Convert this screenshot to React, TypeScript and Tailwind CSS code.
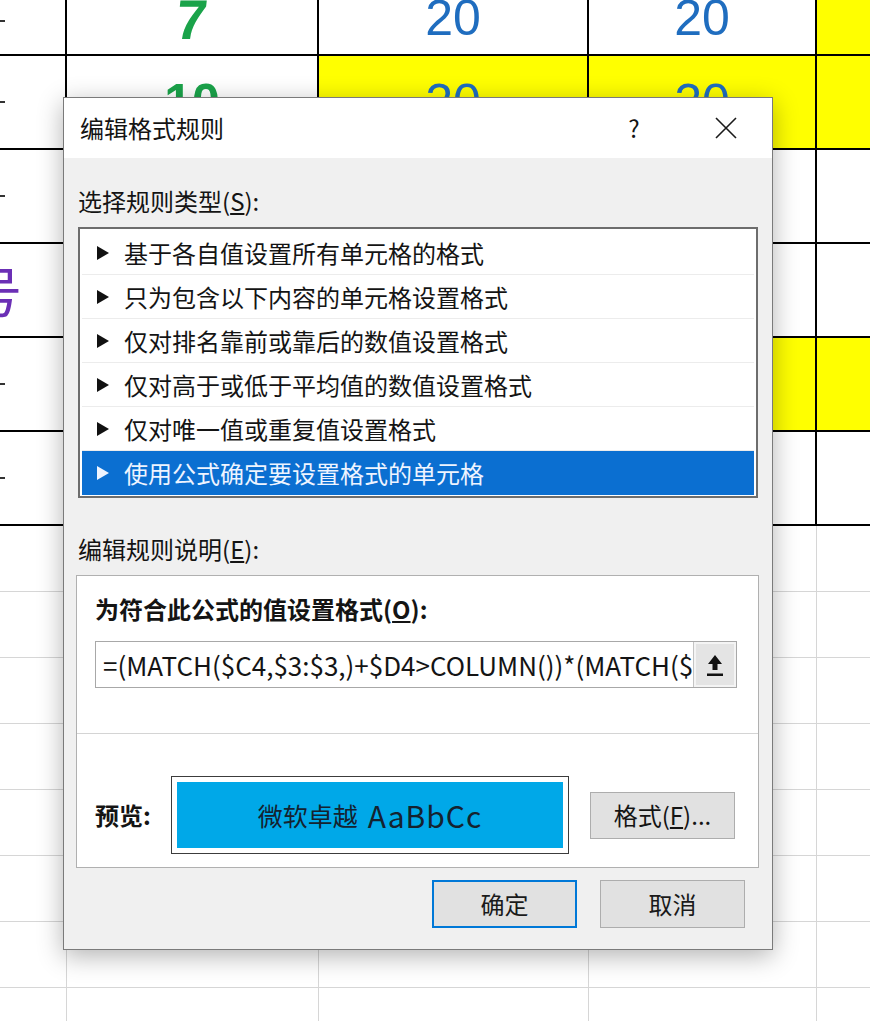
import React from 'react'

const cjk = "font-['Noto_Sans_CJK_SC','Noto_Sans',sans-serif]"

const Mark = () => <span className="block h-[2px] w-[5px] bg-[#333]" />

const Num = ({ text, className = '' }: { text: string; className?: string }) => (
  <span className={`inline-block font-['Liberation_Sans',sans-serif] text-[50px] leading-none ${className}`}>{text}</span>
)

type CellDef = { bg?: string; node?: React.ReactNode; align?: string }

const widths = ['w-[67px]', 'w-[252px]', 'w-[270px]', 'w-[228px]', 'flex-1']

const Row = ({ cells, h, light }: { cells: CellDef[]; h: string; light?: boolean }) => (
  <div className={`flex ${h} ${light ? 'border-b border-[#d6d6d6]' : 'border-b-2 border-black'}`}>
    {widths.map((w, i) => {
      const c = cells[i] || {}
      return (
        <div
          key={i}
          className={`${w} flex overflow-hidden ${c.align || 'items-center justify-center'} ${c.bg || 'bg-white'} ${
            i < 4 ? (light ? 'border-r border-[#d6d6d6]' : 'border-r-2 border-black') : ''
          }`}
        >
          {c.node}
        </div>
      )
    })}
  </div>
)

const Sheet = () => {
  const left: CellDef = { node: <Mark />, align: 'items-center justify-start' }
  return (
    <div className="w-full">
      <Row
        h="h-[56px]"
        cells={[
          { node: <Mark />, align: 'items-start justify-start pt-[20px]' },
          {
            node: <Num text="7" className="-mt-[8px] -skew-x-6 text-[56px] font-bold text-[#1aa34a]" />,
            align: 'items-start justify-center',
          },
          { node: <Num text="20" className="-mt-[7px] text-[#1f6dbf]" />, align: 'items-start justify-center' },
          { node: <Num text="20" className="-mt-[7px] text-[#1f6dbf]" />, align: 'items-start justify-center' },
          { bg: 'bg-[#ffff00]' },
        ]}
      />
      <Row
        h="h-[94px]"
        cells={[
          left,
          { node: <Num text="10" className="font-bold text-[#1aa34a]" /> },
          { bg: 'bg-[#ffff00]', node: <Num text="20" className="text-[#1f6dbf]" /> },
          { bg: 'bg-[#ffff00]', node: <Num text="20" className="text-[#1f6dbf]" /> },
          { bg: 'bg-[#ffff00]' },
        ]}
      />
      <Row h="h-[94px]" cells={[left]} />
      <Row
        h="h-[94px]"
        cells={[
          {
            node: <span className={`${cjk} -ml-[32px] text-[54px] leading-none text-[#6b2fb5]`}>号</span>,
            align: 'items-center justify-start',
          },
        ]}
      />
      <Row h="h-[94px]" cells={[left, {}, {}, { bg: 'bg-[#ffff00]' }, { bg: 'bg-[#ffff00]' }]} />
      <Row h="h-[94px]" cells={[left]} />
      {Array.from({ length: 8 }).map((_, i) => (
        <Row key={i} h="h-[66px]" light cells={[]} />
      ))}
    </div>
  )
}

const Tri = ({ color }: { color: string }) => (
  <svg width="12" height="14" viewBox="0 0 12 14" className="shrink-0">
    <polygon points="0,0 12,7 0,14" fill={color} />
  </svg>
)

const rules = [
  '基于各自值设置所有单元格的格式',
  '只为包含以下内容的单元格设置格式',
  '仅对排名靠前或靠后的数值设置格式',
  '仅对高于或低于平均值的数值设置格式',
  '仅对唯一值或重复值设置格式',
  '使用公式确定要设置格式的单元格',
]

const Btn = ({ children, primary }: { children: React.ReactNode; primary?: boolean }) => (
  <div
    className={`flex h-[48px] w-[145px] items-center justify-center bg-[#e1e1e1] text-[24px] leading-none text-[#1a1a1a] ${
      primary ? 'border-2 border-[#0078d7]' : 'border border-[#adadad]'
    }`}
  >
    {children}
  </div>
)

const Dialog = () => (
  <div
    className={`${cjk} absolute left-[63px] top-[97px] w-[710px] border border-[#7a7a7a] bg-[#f0f0f0] text-[#141414] shadow-[0_6px_24px_rgba(0,0,0,0.3)]`}
  >
    <div className="flex h-[60px] items-center bg-white pl-[16px] pr-[35px]">
      <span className="text-[24px] leading-[28px]">编辑格式规则</span>
      <span className="ml-auto w-[24px] text-center text-[24px] leading-none">?</span>
      <svg width="22" height="22" viewBox="0 0 22 22" className="ml-[69px]">
        <path d="M1 1L21 21M21 1L1 21" stroke="#1a1a1a" strokeWidth="1.6" />
      </svg>
    </div>

    <div className="px-[14px] pb-[21px] pt-[29px]">
      <div className="text-[24px] leading-[28px]">
        选择规则类型(<span className="underline underline-offset-2">S</span>):
      </div>

      <div className="mt-[12px] w-[680px] border-2 border-[#6d6d6d] bg-white px-[2px] pb-[1px] pt-[2px]">
        {rules.map((r, i) => {
          const sel = i === rules.length - 1
          return (
            <div
              key={r}
              className={`flex h-[44px] items-center pl-[15px] ${
                sel ? 'bg-[#0b6fd1] text-[#eef4ff]' : 'border-b border-[#ececec]'
              }`}
            >
              <Tri color={sel ? '#eef4ff' : '#111'} />
              <span className="ml-[15px] text-[24px] leading-none">{r}</span>
            </div>
          )
        })}
      </div>

      <div className="mt-[37px] text-[24px] leading-[28px]">
        编辑规则说明(<span className="underline underline-offset-2">E</span>):
      </div>

      <div className="-ml-[2px] mt-[12px] w-[683px] border border-[#b0b0b0] bg-white">
        <div className="pb-[45px] pl-[18px] pr-[21px] pt-[19px]">
          <div className="text-[24px] font-bold leading-[28px]">
            为符合此公式的值设置格式(<span className="underline underline-offset-2">O</span>):
          </div>
          <div className="mt-[18px] flex h-[47px] border border-[#a8a8a8]">
            <div className="flex flex-1 items-center overflow-hidden whitespace-nowrap pl-[7px] text-[26px] leading-none">
              =(MATCH($C4,$3:$3,)+$D4&gt;COLUMN())*(MATCH($C4,$3:$3,)&lt;=COLUMN())
            </div>
            <div className="flex w-[43px] items-center justify-center border-l border-[#c4c4c4] bg-[#e4e4e4] shadow-[inset_0_0_0_2px_#f4f4f4]">
              <svg width="18" height="24" viewBox="0 0 18 24">
                <path d="M9 2L2 11H6.5V17H11.5V11H16Z" fill="#111" />
                <rect x="1" y="20.5" width="16" height="2.5" fill="#111" />
              </svg>
            </div>
          </div>
        </div>
        <div className="flex items-center border-t border-[#d4d4d4] pb-[13px] pl-[18px] pt-[42px]">
          <span className="w-[76px] text-[24px] font-bold leading-none">预览:</span>
          <div className="h-[78px] w-[398px] border border-[#3c3c3c] bg-white p-[5px]">
            <div className="flex h-full items-center justify-center bg-[#00a8e8] leading-none text-[#15222f]">
              <span className="text-[25px]">微软卓越</span>
              <span className="ml-[10px] text-[30px] tracking-[1px]">AaBbCc</span>
            </div>
          </div>
          <div className="ml-[21px] flex h-[47px] w-[145px] items-center justify-center border border-[#adadad] bg-[#e1e1e1] text-[24px] leading-none">
            格式(<span className="underline underline-offset-2">F</span>)...
          </div>
        </div>
      </div>

      <div className="mr-[13px] mt-[12px] flex justify-end gap-[23px]">
        <Btn primary>确定</Btn>
        <Btn>取消</Btn>
      </div>
    </div>
  </div>
)

export default function App() {
  return (
    <div className="relative h-[1021px] w-[870px] overflow-hidden bg-white">
      <Sheet />
      <Dialog />
    </div>
  )
}
